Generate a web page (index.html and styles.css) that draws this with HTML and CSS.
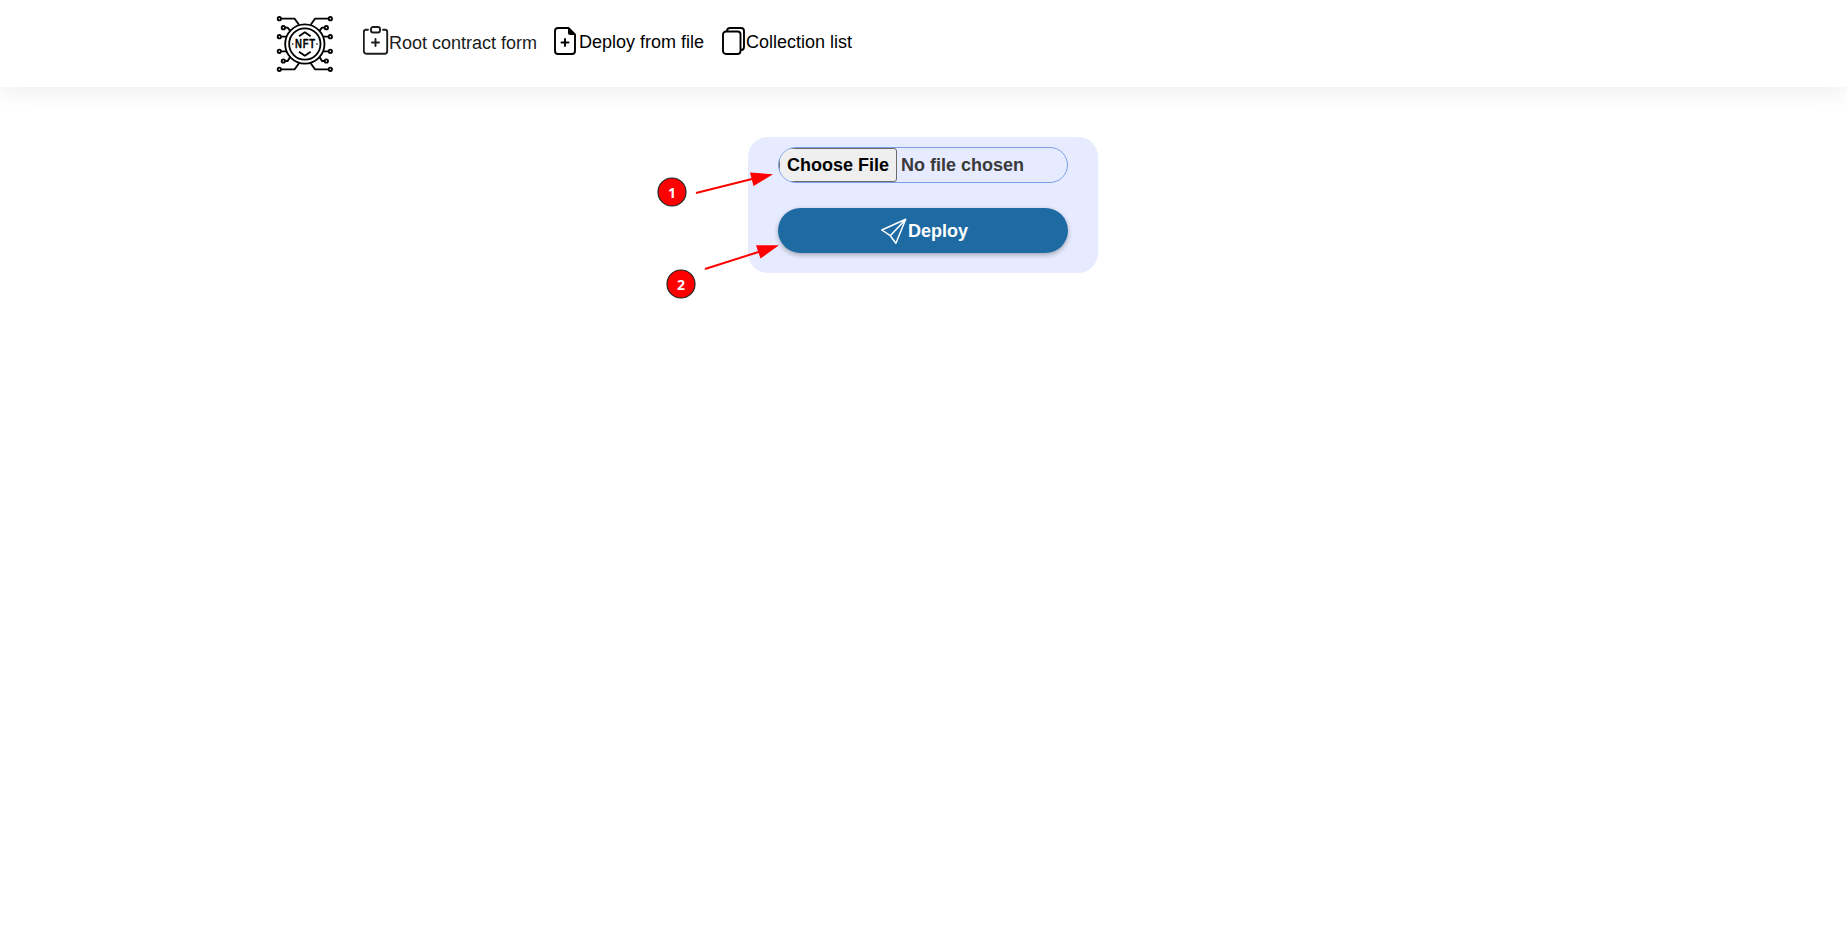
FILE: index.html
```html
<!DOCTYPE html>
<html lang="en">
<head>
<meta charset="utf-8">
<title>Deploy from file</title>
<link rel="stylesheet" href="styles.css">
</head>
<body>
<header class="header">
  <svg class="logo" viewBox="0 0 210 216">
    <g id="half" class="trace">
      <path d="M34 32H74L87 50M46 59H53L60 68M34 86H50M34 130H50M46 159H53L60 148M34 184H74L87 166"/>
      <circle cx="28" cy="32" r="5"/><circle cx="40" cy="59" r="5"/><circle cx="28" cy="86" r="5"/>
      <circle cx="28" cy="130" r="5"/><circle cx="40" cy="159" r="5"/><circle cx="28" cy="184" r="5"/>
    </g>
    <use href="#half" transform="translate(209 0) scale(-1 1)"/>
    <g class="trace">
      <circle cx="104.500" cy="108" r="59"/><circle cx="104.500" cy="108" r="47"/>
      <path d="M87 85L104.500 73L122 85M87 131L104.500 143L122 131"/>
    </g>
    <circle cx="68" cy="108" r="2.500"/><circle cx="141" cy="108" r="2.500"/>
    <text class="logo-text" transform="translate(75 120.500) scale(.76 1)" textLength="80">NFT</text>
  </svg>
  <nav class="nav">
    <a class="link link-hover">
      <svg class="icon" viewBox="0 0 26 30"><rect x="8" y="1" width="9" height="5.500" rx="2"/><path d="M5 3.800H3Q.8 3.800.8 6V25Q.8 27.800 3.500 27.800H21.500Q24.200 27.800 24.200 25V6Q24.200 3.800 22 3.800H20M12.500 13V20M9 16.500H16"/></svg><span>Root contract form</span>
    </a>
    <a class="link">
      <svg class="icon" viewBox="0 0 26 30"><path class="bold" d="M15.500 1H5Q2 1 2 4V24Q2 27 5 27H19Q22 27 22 24V7.500Z"/><path class="solid" d="M15 1L22 8H17Q15 8 15 6Z"/><path d="M12 12V19M8.500 15.500H15.500"/></svg><span>Deploy from file</span>
    </a>
    <a class="link">
      <svg class="icon" viewBox="0 0 26 30"><rect class="bold" x="3" y="4.500" width="17.500" height="22.500" rx="3"/><path class="bold" d="M7 4Q7 1 10 1H21Q24 1 24 4V20Q24 23 21 23"/></svg><span>Collection list</span>
    </a>
  </nav>
</header>
<main class="main">
  <form class="card">
    <div class="file"><span class="file-button">Choose File</span><span class="file-name">No file chosen</span></div>
    <button class="deploy" type="button">
      <svg class="plane" viewBox="0 0 27 27"><path d="M.8 12L24.700 1.300L14.900 25.300L9.300 17.700ZM9.300 17.700L24.700 1.300"/></svg><span>Deploy</span>
    </button>
  </form>
</main>
<svg class="notes" viewBox="0 0 1847 948">
  <path class="arrow" d="M696 193L754 178.500M705 269L760 251.500"/>
  <path class="tip" d="M750 172.500L773 174.300L753.500 186ZM756 245.200L779 245.200L760.500 258.500Z"/>
  <circle class="pin" cx="672" cy="192" r="14"/><text class="pin-text" x="672" y="198">1</text>
  <circle class="pin" cx="681" cy="284" r="14"/><text class="pin-text" x="681" y="290">2</text>
</svg>
</body>
</html>
```
FILE: styles.css
```css
* { box-sizing: border-box; }
body {
  margin: 0;
  height: 948px;
  overflow: hidden;
  background: #fff;
  font-family: "Liberation Sans", Arial, sans-serif;
  font-size: 18px;
}
.header {
  display: flex;
  align-items: flex-start;
  height: 87px;
  padding: 8px 0 0 270px;
  box-shadow: 0 0 30px rgba(0, 0, 0, .1);
}
.logo { width: 70px; height: 72px; }
.trace { fill: none; stroke: #000; stroke-width: 5.5; stroke-linejoin: round; }
.logo-text { font: bold 38px "Liberation Sans", Arial, sans-serif; stroke: #000; stroke-width: .8; }
.nav { display: flex; gap: 16px; padding: 18px 0 0 23px; }
.link { display: flex; height: 32px; line-height: 32px; color: #000; white-space: nowrap; }
.link-hover { width: 174px; color: #1c1c1c; }
.link-hover span { padding-top: 1px; }
.icon { flex: none; width: 26px; height: 30px; margin-top: 1px; fill: none; stroke: currentColor; stroke-width: 1.9; stroke-linecap: round; stroke-linejoin: round; }
.link-hover .icon { margin-top: 0; }
.bold { stroke-width: 1.9; }
.solid { fill: currentColor; stroke: none; }
.main { display: flex; padding: 50px 0 0 748px; }
.card {
  display: flex;
  flex-direction: column;
  gap: 25px;
  width: 350px;
  height: 136px;
  padding: 10px 30px;
  border-radius: 20px;
  background: #e6ebff;
}
.file {
  display: flex;
  height: 36px;
  overflow: hidden;
  border: 1px solid #7a9ee6;
  border-radius: 18px;
  font-weight: bold;
  line-height: 33px;
  white-space: nowrap;
}
.file-button {
  width: 118px;
  height: 34px;
  padding-left: 7px;
  border: 1px solid #6b6b6b;
  border-radius: 3px;
  background: #efefef;
  color: #000;
}
.file-name { padding-left: 4px; line-height: 35px; color: #3a3a3a; }
.deploy {
  display: flex;
  align-items: center;
  justify-content: center;
  height: 45px;
  padding: 2px 0 0 3px;
  border: 0;
  border-radius: 23px;
  background: #1e6ba4;
  box-shadow: 0 2px 5px rgba(0, 0, 0, .3);
  color: #fff;
  font: bold 18px "Liberation Sans", Arial, sans-serif;
}
.plane { width: 27px; height: 27px; fill: none; stroke: #fff; stroke-width: 1.5; stroke-linejoin: round; }
.notes { position: absolute; left: 0; top: 0; width: 1847px; height: 948px; pointer-events: none; }
.arrow { stroke: #f00; stroke-width: 2; }
.tip { fill: #f00; }
.pin { fill: #f00; stroke: #222; stroke-width: 1.2; }
.pin-text { fill: #fff; font: bold 14px "Open Sans", sans-serif; text-anchor: middle; }
```
